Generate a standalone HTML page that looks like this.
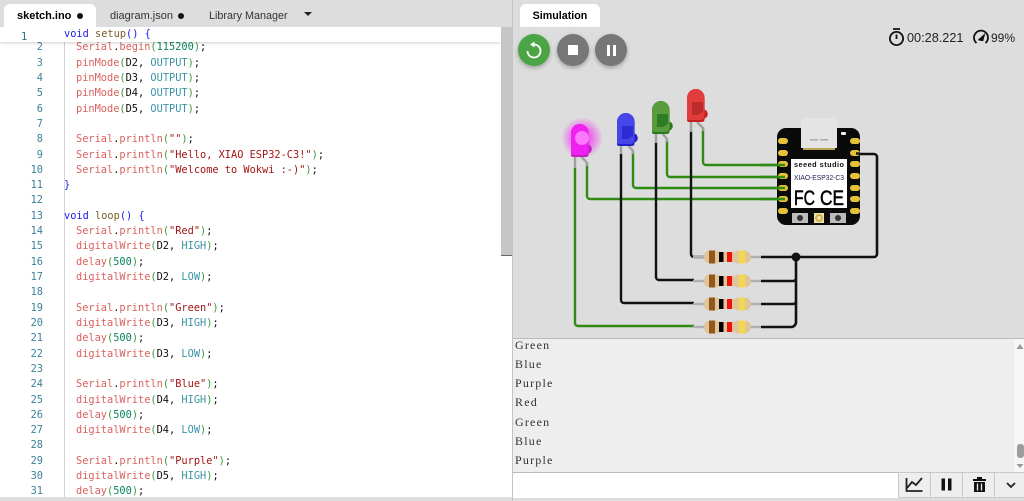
<!DOCTYPE html>
<html><head><meta charset="utf-8"><style>
html,body{margin:0;padding:0;width:1024px;height:501px;overflow:hidden;background:#ddd}
*{box-sizing:border-box}
.abs,.tab,.btn,.sb{position:absolute}
#ed{position:absolute;left:0;top:27px;width:501px;height:470px;background:#fff;overflow:hidden}
pre{margin:0;font-family:"DejaVu Sans Mono",monospace;font-size:10.3px;line-height:15.31px;position:absolute;color:#111}
#nums{left:0;top:13.35px;width:43px;text-align:right;color:#3b8199}
#code{left:64px;top:13.35px;border-left:1px solid #d3d3d3;padding-left:11px;height:480px;width:430px}
#stick{position:absolute;left:0;top:0;width:501px;height:15px;background:#fff;box-shadow:0 1px 3px rgba(0,0,0,.2)}
i{font-style:normal}
.f{color:#d9625e}.p{color:#3a9a3a}.s{color:#a31515}.n{color:#098658}.c{color:#3a94a4}.k{color:#2222ee}.y{color:#795e26}
.tab{top:4px;height:23px;font:10.8px/24px "Liberation Sans",sans-serif;color:#333;white-space:nowrap}
.on{background:#fff;border-radius:6px 6px 0 0;color:#000;font-weight:bold;text-align:center}
.dot{position:absolute;top:13px;width:6px;height:6px;border-radius:50%;background:#111}
.btn{top:34px;width:32px;height:32px;border-radius:50%;background:#777;box-shadow:0 2px 4px rgba(0,0,0,.28)}
#ser{position:absolute;left:513px;top:338px;width:501px;height:134px;background:#eee;border-top:1px solid #bbb;overflow:hidden}
#ser pre{left:2px;top:-3.500px;font-family:"Liberation Serif",serif;font-size:12px;letter-spacing:1.2px;line-height:19.25px;color:#333}
.sb{top:472px;height:26px;background:#eee;border:1px solid #c8c8c8;border-bottom-color:#ccc}
</style></head><body>
<div class="tab on" style="left:4px;width:92px;font-size:11px;text-align:left;padding-left:13px">sketch.ino</div>
<div class="dot" style="left:77px"></div>
<div class="tab" style="left:110px;font-size:11px">diagram.json</div>
<div class="dot" style="left:178px"></div>
<div class="tab" style="left:209px">Library Manager</div>
<svg class="abs" style="left:304px;top:12px" width="10" height="6"><path d="M0 0h8l-4 4z" fill="#222"/></svg>
<div id="ed">
<pre id="nums">2
3
4
5
6
7
8
9
10
11
12
13
14
15
16
17
18
19
20
21
22
23
24
25
26
27
28
29
30
31</pre>
<pre id="code"><i class="f">Serial</i>.<i class="f">begin</i><i class="p">(</i><i class="n">115200</i><i class="p">)</i>;
<i class="f">pinMode</i><i class="p">(</i>D2, <i class="c">OUTPUT</i><i class="p">)</i>;
<i class="f">pinMode</i><i class="p">(</i>D3, <i class="c">OUTPUT</i><i class="p">)</i>;
<i class="f">pinMode</i><i class="p">(</i>D4, <i class="c">OUTPUT</i><i class="p">)</i>;
<i class="f">pinMode</i><i class="p">(</i>D5, <i class="c">OUTPUT</i><i class="p">)</i>;

<i class="f">Serial</i>.<i class="f">println</i><i class="p">(</i><i class="s">""</i><i class="p">)</i>;
<i class="f">Serial</i>.<i class="f">println</i><i class="p">(</i><i class="s">"Hello, XIAO ESP32-C3!"</i><i class="p">)</i>;
<i class="f">Serial</i>.<i class="f">println</i><i class="p">(</i><i class="s">"Welcome to Wokwi :-)"</i><i class="p">)</i>;
<span class="k" style="margin-left:-12px">}</span>

<span class="k" style="margin-left:-12px">void</span> <i class="y">loop</i><i class="k">()</i> <i class="k">{</i>
<i class="f">Serial</i>.<i class="f">println</i><i class="p">(</i><i class="s">"Red"</i><i class="p">)</i>;
<i class="f">digitalWrite</i><i class="p">(</i>D2, <i class="c">HIGH</i><i class="p">)</i>;
<i class="f">delay</i><i class="p">(</i><i class="n">500</i><i class="p">)</i>;
<i class="f">digitalWrite</i><i class="p">(</i>D2, <i class="c">LOW</i><i class="p">)</i>;

<i class="f">Serial</i>.<i class="f">println</i><i class="p">(</i><i class="s">"Green"</i><i class="p">)</i>;
<i class="f">digitalWrite</i><i class="p">(</i>D3, <i class="c">HIGH</i><i class="p">)</i>;
<i class="f">delay</i><i class="p">(</i><i class="n">500</i><i class="p">)</i>;
<i class="f">digitalWrite</i><i class="p">(</i>D3, <i class="c">LOW</i><i class="p">)</i>;

<i class="f">Serial</i>.<i class="f">println</i><i class="p">(</i><i class="s">"Blue"</i><i class="p">)</i>;
<i class="f">digitalWrite</i><i class="p">(</i>D4, <i class="c">HIGH</i><i class="p">)</i>;
<i class="f">delay</i><i class="p">(</i><i class="n">500</i><i class="p">)</i>;
<i class="f">digitalWrite</i><i class="p">(</i>D4, <i class="c">LOW</i><i class="p">)</i>;

<i class="f">Serial</i>.<i class="f">println</i><i class="p">(</i><i class="s">"Purple"</i><i class="p">)</i>;
<i class="f">digitalWrite</i><i class="p">(</i>D5, <i class="c">HIGH</i><i class="p">)</i>;
<i class="f">delay</i><i class="p">(</i><i class="n">500</i><i class="p">)</i>;</pre>
<div id="stick">
<pre style="left:21px;top:3px;color:#2a6f8a">1</pre>
<pre style="left:64px;top:0px"><i class="k">void</i> <i class="y">setup</i><i class="k">()</i> <i class="k">{</i></pre>
</div>
</div>
<div class="abs" style="left:501px;top:27px;width:11px;height:229px;background:#c6c6c6;border-bottom:1px solid #666"></div>
<div class="abs" style="left:501px;top:256px;width:11px;height:241px;background:#fff"></div>
<div class="abs" style="left:512px;top:0;width:1px;height:501px;background:#c4c4c4"></div>

<div class="tab on" style="left:520px;width:80px;font-size:10.7px">Simulation</div>

<div class="btn" style="left:518px;background:#4ba545"></div>
<svg class="abs" style="left:518px;top:34px" width="32" height="32"><path d="M16 10.500a6.500 6.500 0 1 1-6.500 6.500" fill="none" stroke="#fff" stroke-width="1.800"/><path d="M16.500 7.500v6l-4.500-3z" fill="#fff"/></svg>
<div class="btn" style="left:557px"></div>
<div class="abs" style="left:568px;top:45px;width:10px;height:10px;background:#fff"></div>
<div class="btn" style="left:595px"></div>
<div class="abs" style="left:607px;top:45px;width:3px;height:11px;background:#fff"></div>
<div class="abs" style="left:613px;top:45px;width:3px;height:11px;background:#fff"></div>

<svg class="abs" style="left:888px;top:27px" width="20" height="20" fill="none" stroke="#111" stroke-width="1.800"><circle cx="8.500" cy="11.500" r="6.600"/><path d="M5 2h7M8.500 7.500v4.500"/></svg>
<div class="abs" style="left:907px;top:30px;font:12.7px/16px 'Liberation Sans',sans-serif;color:#222">00:28.221</div>
<svg class="abs" style="left:972px;top:29px" width="18" height="18" fill="none" stroke="#111" stroke-width="1.800"><path d="M4.500 14A7 7 0 1 1 13.500 14"/><path d="M6 11L13 4.500L11 12z" fill="#111" stroke-width="0.500"/></svg>
<div class="abs" style="left:991px;top:30px;font:12px/16px 'Liberation Sans',sans-serif;color:#222">99%</div>

<svg class="abs" style="left:513px;top:0" width="511" height="338" viewBox="513 0 511 338">
<defs>
<radialGradient id="gl"><stop offset="0.35" stop-color="#f02df0" stop-opacity=".75"/><stop offset="1" stop-color="#f02df0" stop-opacity="0"/></radialGradient>
<g id="res"><rect x="693" y="-1.200" width="68" height="2.400" fill="#b0b0b0"/>
<path d="M704 0c0-5 3-6.500 7-6.500h5c2 0 3 1.500 5 1.500h12c2 0 3-1.500 5-1.500h5c4 0 8 1.500 8 6.500s-4 6.500-8 6.500h-5c-2 0-3-1.500-5-1.500h-12c-2 0-3 1.500-5 1.500h-5c-4 0-7-1.500-7-6.500z" fill="#e0c49a"/>
<rect x="709" y="-6.500" width="6" height="13" fill="#92571c"/><rect x="719" y="-5" width="4.500" height="10" fill="#000"/><rect x="727" y="-5" width="5" height="10" fill="#f01010"/><rect x="739" y="-6.500" width="6" height="13" fill="#f2d84f"/></g>
<g id="led"><circle cx="16" cy="25" r="4.800" fill="var(--d)"/><path d="M0 9a8.800 9 0 0 1 17.600 0v21q0 3-3 3H2q-2 0-2-2z" fill="var(--d)"/><path d="M0 9a8.800 9 0 0 1 17.600 0v17q0 5-5 5H2q-2 0-2-2z" fill="var(--l)"/></g>
</defs>
<g fill="none" stroke-width="2.400" stroke-linejoin="round">
<g stroke="#2f8b14">
<path d="M703 128v34a3 3 0 0 0 3 3h75"/><path d="M667 140v34a3 3 0 0 0 3 3h111"/><path d="M633 152v33a3 3 0 0 0 3 3h145"/><path d="M587 163v33a3 3 0 0 0 3 3h191"/>
<path d="M575 168v155a3 3 0 0 0 3 3h116"/>
</g>
<g stroke="#111">
<path d="M691 130v124a3 3 0 0 0 3 3h12"/><path d="M656 142v135a3 3 0 0 0 3 3h35"/><path d="M621 154v146a3 3 0 0 0 3 3h70"/>
<path d="M761 257h113a3 3 0 0 0 3-3V157a3 3 0 0 0-3-3h-18" stroke-width="2.600"/>
<path d="M761 281h32a3 3 0 0 0 3-3M761 304h32a3 3 0 0 0 3-3M761 327h30a5 5 0 0 0 5-5V257" stroke-width="2.600"/>
</g>
<g stroke="#a0a0a0"><path d="M691 122v10M697 122l6 6v3"/><path d="M656 133v10M662 133l5 6v3"/><path d="M621 144v10M627 144l6 7v3"/><path d="M575 156v12M581 156l6 7v3"/></g>
</g>
<circle cx="796" cy="257" r="4.500" fill="#111"/>
<use href="#res" y="257"/><use href="#res" y="281"/><use href="#res" y="304"/><use href="#res" y="327"/>

<!-- LEDs -->
<g transform="translate(687,89)" style="--d:#c42020;--l:#e23c3c"><use href="#led"/><path d="M5 13h11v10l-5 3H5z" fill="#bb2d2d"/></g>
<g transform="translate(652,101)" style="--d:#2c7a1d;--l:#589c3c"><use href="#led"/><path d="M5 13h11v10l-5 3H5z" fill="#2f7c27"/></g>
<g transform="translate(617,113)" style="--d:#2222c8;--l:#4646e8"><use href="#led"/><path d="M5 13h11v10l-5 3H5z" fill="#2c2cd2"/></g>
<circle cx="582" cy="138" r="21" fill="url(#gl)"/>
<g transform="translate(571,124)" style="--d:#c020c0;--l:#f020f0"><use href="#led"/><circle cx="11" cy="14" r="7" fill="#ff90ff" opacity=".8"/></g>

<!-- board -->
<rect x="777" y="128" width="83" height="97" rx="9" fill="#0a0a0a"/>
<path d="M801 123q0-5 5-5h26q5 0 5 5v25h-36z" fill="#e4e4e4"/>
<path d="M803 148h32v2h-32z" fill="#b9a458"/>
<rect x="810" y="139" width="8" height="1.500" fill="#aaa"/><rect x="820" y="139" width="8" height="1.500" fill="#aaa"/>
<rect x="841" y="132" width="5" height="3" rx="1" fill="#eee"/>
<g fill="#e8c13a">
<rect x="778" y="138" width="10" height="6" rx="3"/><rect x="778" y="150" width="10" height="6" rx="3"/><rect x="778" y="161" width="10" height="6" rx="3"/><rect x="778" y="173" width="10" height="6" rx="3"/><rect x="778" y="185" width="10" height="6" rx="3"/><rect x="778" y="196" width="10" height="6" rx="3"/><rect x="778" y="208" width="10" height="6" rx="3"/>
<rect x="850" y="138" width="10" height="6" rx="3"/><rect x="850" y="150" width="10" height="6" rx="3"/><rect x="850" y="161" width="10" height="6" rx="3"/><rect x="850" y="173" width="10" height="6" rx="3"/><rect x="850" y="185" width="10" height="6" rx="3"/><rect x="850" y="196" width="10" height="6" rx="3"/><rect x="850" y="208" width="10" height="6" rx="3"/>
</g>
<g fill="none" stroke="#2f8b14" stroke-width="2.400"><path d="M760 165h25M760 177h25M760 188h25M760 199h25"/></g>
<path d="M856 153.500h4" stroke="#111" stroke-width="2.400"/>
<rect x="791" y="159" width="56" height="49" fill="#fff"/>
<text x="794" y="167" font-family="Liberation Sans,sans-serif" font-size="7.300" font-weight="bold" fill="#111" textLength="50">seeed studio</text>
<text x="794" y="180" font-family="Liberation Sans,sans-serif" font-size="7.400" fill="#222255" textLength="50" lengthAdjust="spacingAndGlyphs">XIAO-ESP32-C3</text>
<text x="794" y="205" font-family="Liberation Sans,sans-serif" font-size="21" stroke="#000" stroke-width=".5" fill="#000" textLength="21" lengthAdjust="spacingAndGlyphs">FC</text>
<text x="820" y="205" font-family="Liberation Sans,sans-serif" font-size="21" stroke="#000" stroke-width=".5" fill="#000" textLength="24" lengthAdjust="spacingAndGlyphs">CE</text>
<rect x="792" y="213" width="16" height="10" fill="#bbb"/><circle cx="800" cy="218" r="3" fill="#333"/>
<rect x="814" y="213" width="10" height="10" fill="#eee0a8"/><circle cx="819" cy="218" r="3" fill="none" stroke="#c8a83a" stroke-width="1.500"/>
<rect x="830" y="213" width="16" height="10" fill="#bbb"/><circle cx="838" cy="218" r="3" fill="#333"/>
</svg>

<div id="ser"><pre>Green
Blue
Purple
Red
Green
Blue
Purple</pre></div>
<div class="abs" style="left:1014px;top:338px;width:10px;height:134px;background:#f6f6f6;border-top:1px solid #bbb"></div>
<svg class="abs" style="left:1014px;top:338px" width="10" height="134"><path d="M2.500 11l3.500-5 3.500 5z" fill="#999"/><path d="M2.500 126h7l-3.500 4z" fill="#999"/><rect x="3" y="106" width="7" height="14" rx="3" fill="#9c9c9c"/></svg>
<div class="abs" style="left:513px;top:472px;width:386px;height:26px;background:#fff;border-top:1px solid #bbb"></div>
<div class="sb" style="left:898px;width:33px"></div>
<div class="sb" style="left:930px;width:33px"></div>
<div class="sb" style="left:962px;width:33px"></div>
<div class="sb" style="left:994px;width:30px;border-right:0"></div>
<svg class="abs" style="left:898px;top:472px" width="126" height="26">
<path d="M8.500 6v13h16M9 16l5-6 4 3 6-7" fill="none" stroke="#222" stroke-width="1.800"/>
<rect x="43.500" y="6.500" width="3.500" height="12" fill="#111"/><rect x="50" y="6.500" width="3.500" height="12" fill="#111"/>
<path d="M75 7h13v2h-13zM79 5h5v2h-5zM76 10h11v10h-11z" fill="#111"/><path d="M79.500 11.500v7M83.500 11.500v7" stroke="#eee" stroke-width="1.300"/>
<path d="M109 11l4 4 4-4" fill="none" stroke="#222" stroke-width="1.800"/>
</svg>
<div class="abs" style="left:0;top:497px;width:512px;height:4px;background:#ddd"></div>
</body></html>
